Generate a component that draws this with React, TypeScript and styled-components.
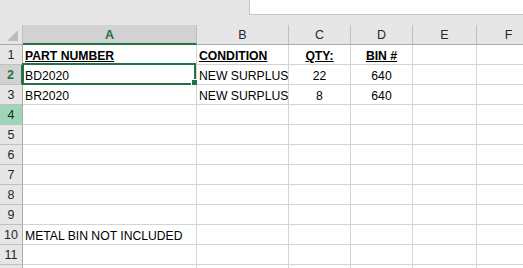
import React from "react";
import styled, { createGlobalStyle } from "styled-components";

const Global = createGlobalStyle`
  html, body { margin: 0; padding: 0; background: #e6e6e6; }
  body {
    width: 523px;
    height: 268px;
    overflow: hidden;
    font-family: "Liberation Sans", Arial, sans-serif;
  }
`;

const GREEN = "#217346";

const Window = styled.div`
  width: 523px;
  height: 268px;
  overflow: hidden;
  display: flex;
  flex-direction: column;
  background: #e6e6e6;
`;

const FormulaStrip = styled.div`
  height: 15px;
  flex-shrink: 0;
  display: flex;
`;

const NameArea = styled.div`
  width: 249px;
`;

const FormulaInput = styled.div`
  flex: 1;
  background: #fff;
  border-left: 1px solid #c6c6c6;
  border-bottom: 1px solid #c6c6c6;
`;

const Gap = styled.div`
  height: 10px;
  flex-shrink: 0;
`;

const Sheet = styled.div`
  display: grid;
  grid-template-columns: 23px 174px 92px 62px 62px 64px 64px;
  grid-auto-rows: 20px;
  box-sizing: border-box;
`;

const Corner = styled.div`
  position: relative;
  background: #e6e6e6;
  border-right: 1px solid #bfbfbf;
  border-bottom: 1px solid #ababab;
  box-sizing: border-box;
`;

const CornerTriangle = styled.svg`
  position: absolute;
  left: 7px;
  top: 5px;
`;

const ColHeader = styled.div<{ $selected?: boolean }>`
  box-sizing: border-box;
  display: flex;
  align-items: center;
  justify-content: center;
  padding-top: 1px;
  font-size: 12.5px;
  background: ${(p) => (p.$selected ? "#d2d2d2" : "#e6e6e6")};
  color: ${(p) => (p.$selected ? GREEN : "#262626")};
  font-weight: ${(p) => (p.$selected ? 700 : 400)};
  border-right: 1px solid #bfbfbf;
  border-bottom: ${(p) => (p.$selected ? `2px solid ${GREEN}` : "1px solid #ababab")};
`;

const RowHeader = styled.div<{ $state?: "selected" | "hover" }>`
  box-sizing: border-box;
  display: flex;
  align-items: center;
  justify-content: center;
  padding-top: 1px;
  font-size: 12.5px;
  background: ${(p) =>
    p.$state === "selected" ? "#d2d2d2" : p.$state === "hover" ? "#9fd5b7" : "#e6e6e6"};
  color: ${(p) => (p.$state === "selected" ? GREEN : "#262626")};
  font-weight: ${(p) => (p.$state === "selected" ? 700 : 400)};
  border-right: ${(p) => (p.$state === "selected" ? `2px solid ${GREEN}` : "1px solid #ababab")};
  border-bottom: 1px solid #bfbfbf;
`;

const Cell = styled.div<{ $align?: "left" | "center"; $bold?: boolean }>`
  position: relative;
  box-sizing: border-box;
  background: #fff;
  display: flex;
  align-items: flex-end;
  justify-content: ${(p) => (p.$align === "center" ? "center" : "flex-start")};
  padding: 0 2px 1px 2px;
  font-size: 12.2px;
  line-height: 14px;
  color: #000;
  white-space: nowrap;
  font-weight: ${(p) => (p.$bold ? 700 : 400)};
  text-decoration: ${(p) => (p.$bold ? "underline" : "none")};
  border-right: 1px solid #d4d4d4;
  border-bottom: 1px solid #d4d4d4;
`;

const Selection = styled.div`
  position: absolute;
  left: -1px;
  top: -2px;
  right: 0;
  bottom: -1px;
  border: 2px solid ${GREEN};
  pointer-events: none;
`;

const FillHandle = styled.div`
  position: absolute;
  right: -4px;
  bottom: -3px;
  width: 5px;
  height: 5px;
  background: ${GREEN};
  border: 1px solid #fff;
`;

type CellData = { t: string; bold?: boolean; center?: boolean };

const columns = ["A", "B", "C", "D", "E", "F"];

const rows: CellData[][] = [
  [
    { t: "PART NUMBER", bold: true },
    { t: "CONDITION", bold: true },
    { t: "QTY:", bold: true, center: true },
    { t: "BIN #", bold: true, center: true },
  ],
  [{ t: "BD2020" }, { t: "NEW SURPLUS" }, { t: "22", center: true }, { t: "640", center: true }],
  [{ t: "BR2020" }, { t: "NEW SURPLUS" }, { t: "8", center: true }, { t: "640", center: true }],
  [],
  [],
  [],
  [],
  [],
  [],
  [{ t: "METAL BIN NOT INCLUDED" }],
  [],
];

export default function App() {
  return (
    <>
      <Global />
      <Window>
        <FormulaStrip>
          <NameArea />
          <FormulaInput />
        </FormulaStrip>
        <Gap />
        <Sheet>
          <Corner>
            <CornerTriangle width="11" height="11" viewBox="0 0 11 11">
              <polygon points="11,0 11,11 0,11" fill="#bcbcbc" />
            </CornerTriangle>
          </Corner>
          {columns.map((c, i) => (
            <ColHeader key={c} $selected={i === 0}>
              {c}
            </ColHeader>
          ))}
          {rows.map((row, r) => (
            <React.Fragment key={r}>
              <RowHeader $state={r === 1 ? "selected" : r === 3 ? "hover" : undefined}>
                {r + 1}
              </RowHeader>
              {columns.map((_, ci) => {
                const d = row[ci];
                return (
                  <Cell key={ci} $align={d?.center ? "center" : "left"} $bold={d?.bold}>
                    {d?.t}
                    {r === 1 && ci === 0 && (
                      <Selection>
                        <FillHandle />
                      </Selection>
                    )}
                  </Cell>
                );
              })}
            </React.Fragment>
          ))}
          <RowHeader />
          {columns.map((c) => (
            <Cell key={`tail-${c}`} />
          ))}
        </Sheet>
      </Window>
    </>
  );
}
